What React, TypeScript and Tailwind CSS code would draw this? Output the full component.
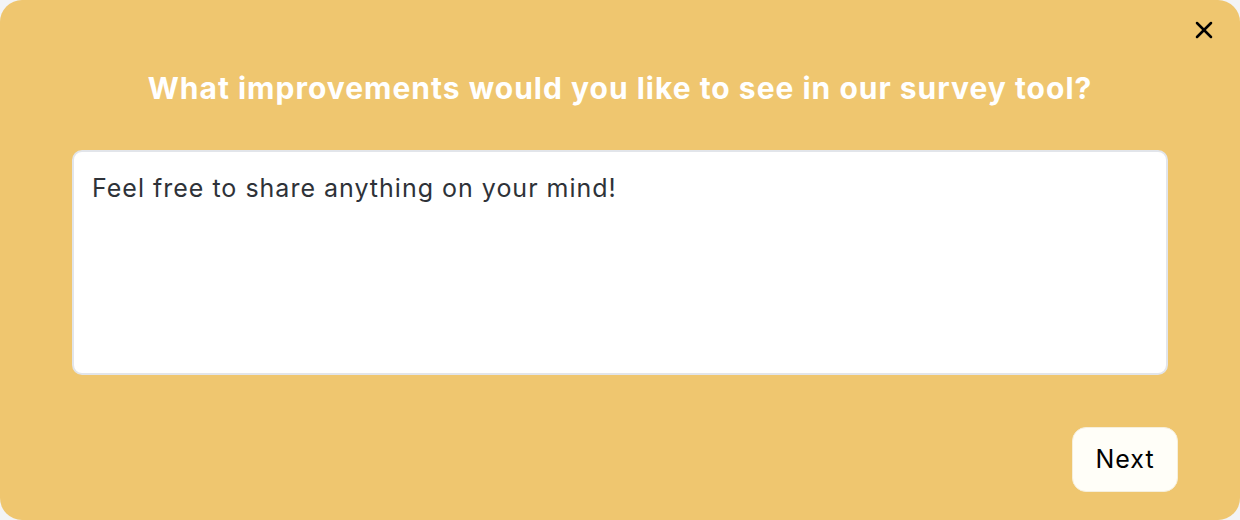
import { X } from 'lucide-react';

export default function App() {
  return (
    <div className="h-[520px] w-[1240px] bg-[#f3f4f6]">
      <div className="relative flex h-full w-full flex-col rounded-[22px] bg-[#efc66f] px-[72px] font-['Inter',sans-serif]">
        <button type="button" className="absolute right-[22px] top-[16px] text-black">
          <X size={28} strokeWidth={2.2} />
        </button>
        <h1 className="mt-[66px] text-center text-[30px] font-bold leading-[44px] tracking-[1px] text-white">
          What improvements would you like to see in our survey tool?
        </h1>
        <textarea
          className="mt-[40px] h-[225px] w-full resize-none rounded-[10px] border-2 border-[#e2e5ea] bg-white px-[18px] py-[18px] text-[25px] leading-[36px] tracking-[1px] text-[#2e3238] outline-none placeholder:text-[#2e3238]"
          placeholder="Feel free to share anything on your mind!"
        />
        <div className="mt-[52px] flex justify-end">
          <button
            type="button"
            className="-mr-[10px] h-[65px] w-[106px] rounded-[14px] border border-[#f6efdc] bg-[#fffef8] text-[25px] tracking-[1px] text-black"
          >
            Next
          </button>
        </div>
      </div>
    </div>
  );
}
